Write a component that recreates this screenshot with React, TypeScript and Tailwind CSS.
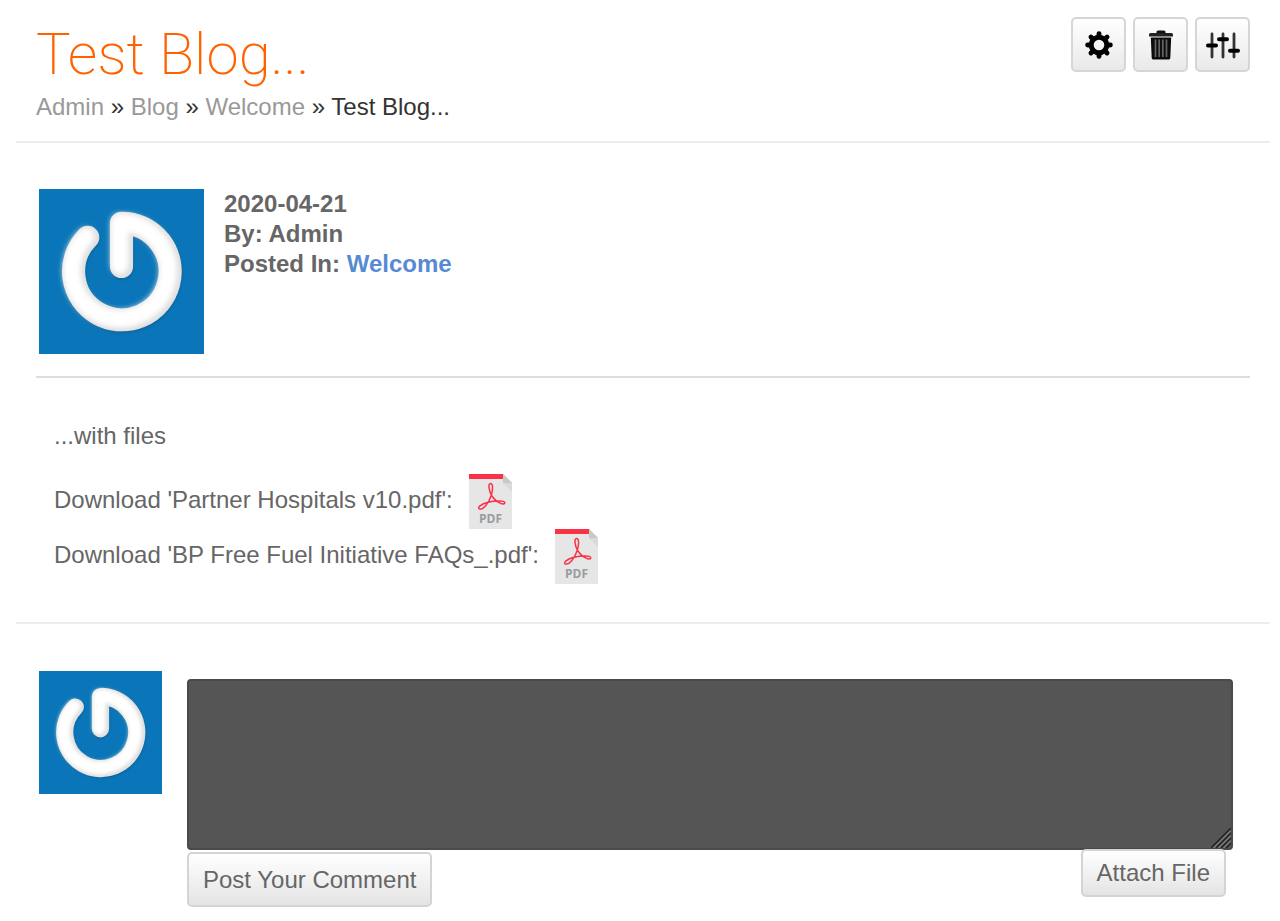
import React from 'react';

const Avatar: React.FC<{ id: string; className: string }> = ({ id, className }) => (
  <svg viewBox="0 0 164 164" className={className} role="img" aria-label="Admin">
    <defs>
      <filter id={`${id}-soft`} x="-20%" y="-20%" width="140%" height="140%">
        <feGaussianBlur stdDeviation="3" />
      </filter>
      <filter id={`${id}-shadow`} x="-20%" y="-20%" width="140%" height="140%">
        <feGaussianBlur stdDeviation="1.5" />
      </filter>
    </defs>
    <rect width="164" height="164" fill="#0a75b8" />
    <g fill="none" strokeLinecap="round" strokeLinejoin="round">
      <path d="M82 77V34A48 48 0 1 1 48.500 48" stroke="#075a92" strokeWidth="23" transform="translate(0 1)" filter={`url(#${id}-shadow)`} />
      <path d="M82 77V34A48 48 0 1 1 48.500 48" stroke="#dedede" strokeWidth="23" />
      <path d="M80 76V33A48 48 0 1 1 46.500 47" stroke="#fff" strokeWidth="15" filter={`url(#${id}-soft)`} />
      <path d="M80 76V33A48 48 0 1 1 46.500 47" stroke="#fff" strokeWidth="13" filter={`url(#${id}-soft)`} />
    </g>
  </svg>
);

const GearIcon: React.FC = () => (
  <svg width="30" height="30" viewBox="0 0 30 30" stroke="#000" fill="none" aria-hidden="true">
    <circle cx="15" cy="15" r="7.800" strokeWidth="5" />
    {[0, 45, 90, 135, 180, 225, 270, 315].map((a) => (
      <path key={a} d="M15 6.500V3.600" strokeWidth="4.800" strokeLinecap="round" transform={`rotate(${a} 15 15)`} />
    ))}
  </svg>
);

const TrashIcon: React.FC = () => (
  <svg width="30" height="30" viewBox="0 0 30 30" aria-hidden="true">
    <path d="M10.500 4V2Q10.500 .5 12 .5H18Q19.500 .5 19.500 2V4Z" fill="#111" />
    <path d="M4.500 3H25.500Q27 3 27 4.500V6.500H3V4.500Q3 3 4.500 3Z" fill="#222" />
    <path d="M4.800 7.500H25.200L24.300 28Q24.200 29.500 22.500 29.500H7.500Q5.800 29.500 5.700 28Z" fill="#0c0c0c" />
    <path d="M9.500 9.500V27M13.200 9.500V27M16.800 9.500V27M20.500 9.500V27" stroke="#666" strokeWidth="1.700" />
  </svg>
);

const SlidersIcon: React.FC = () => (
  <svg width="34" height="30" viewBox="0 0 34 30" fill="none" strokeLinecap="round" aria-hidden="true">
    <path d="M6 4V27M17 4V27M28 4V27" stroke="#333" strokeWidth="2.800" />
    <path d="M2 15.500H10M13 9.300H21M24 20.800H32" stroke="#000" strokeWidth="4" />
  </svg>
);

const PdfIcon: React.FC = () => (
  <svg width="43" height="55" viewBox="0 0 43 55" role="img" aria-label="PDF">
    <path d="M0 0H34L43 9V55H0Z" fill="#e6e6e6" />
    <path d="M34 0L43 9V18L34 9Z" fill="#dadada" />
    <path d="M34 0L43 9H34Z" fill="#c8c8c8" />
    <path d="M0 0H34V5H0Z" fill="#fa3246" />
    <path
      d="M22.600 21.500C20 17 18.800 9.600 21.500 9.600C24.500 9.600 23.700 16.500 22.300 21.300C19.500 30 14 36 10.600 35C7.500 34 12 30 19 28.300C26 26.500 36 26.200 35.800 28.800C35.500 31.500 28 29.500 22.600 21.500Z"
      fill="none"
      stroke="#fa3246"
      strokeWidth="1.500"
    />
    <text x="21.500" y="49" textAnchor="middle" fontFamily="Open Sans, sans-serif" fontWeight="700" fontSize="12" fill="#979ca1">PDF</text>
  </svg>
);

const toolButton =
  'flex size-[55px] items-center justify-center rounded-[5px] border-2 border-[#d6d6d6] bg-gradient-to-b from-white to-[#e9e9e9]';
const textButton =
  'rounded-[5px] border-2 border-[#d4d4d4] bg-gradient-to-b from-white to-[#e4e4e4] px-3.5';

const tools = [
  { label: 'Settings', icon: <GearIcon /> },
  { label: 'Delete', icon: <TrashIcon /> },
  { label: 'Options', icon: <SlidersIcon /> },
];

const files = ['Partner Hospitals v10.pdf', 'BP Free Fuel Initiative FAQs_.pdf'];

const App: React.FC = () => {
  return (
    <div className="bg-white pr-2.5 pl-4 font-['Liberation_Sans',Arial,sans-serif] text-2xl leading-[30px] text-[#666]">
      <header className="flex items-start justify-between border-b-2 border-[#ededed] px-5 pt-[17px] pb-[19px]">
        <div>
          <h1 className="font-['Roboto',sans-serif] text-[58px] leading-[75px] font-extralight text-[#ff6000]">Test Blog...</h1>
          <nav className="text-[#333]">
            <a href="#" className="text-[#999]">Admin</a> » <a href="#" className="text-[#999]">Blog</a> »{' '}
            <a href="#" className="text-[#999]">Welcome</a> » Test Blog...
          </nav>
        </div>
        <div className="flex gap-[7px]">
          {tools.map((t) => (
            <button key={t.label} type="button" aria-label={t.label} className={toolButton}>
              {t.icon}
            </button>
          ))}
        </div>
      </header>

      <main>
        <article className="border-b-2 border-[#ededed] px-5 pt-[46px] pb-[38px]">
          <div className="flex gap-5 border-b-2 border-[#ddd] pb-[22px] pl-[3px] font-bold">
            <Avatar id="author" className="size-[165px] shrink-0" />
            <div>
              <p>2020-04-21</p>
              <p>By: Admin</p>
              <p>
                Posted In: <a href="#" className="text-[#568ad2]">Welcome</a>
              </p>
            </div>
          </div>
          <div className="px-[18px] pt-[43px]">
            <p className="mb-[23px]">...with files</p>
            {files.map((name) => (
              <div key={name} className="flex h-[55px] items-center gap-4">
                <span className="pb-1">Download '{name}':</span>
                <a href="#">
                  <PdfIcon />
                </a>
              </div>
            ))}
          </div>
        </article>

        <form className="flex items-start gap-[25px] pt-[47px] pr-[37px] pl-[23px]">
          <Avatar id="commenter" className="size-[123px] shrink-0" />
          <div className="grow pt-2">
            <div className="relative">
              <textarea
                aria-label="Comment"
                className="block h-[171px] w-full resize-none rounded border-2 border-[#4a4a4a] bg-[#555] p-3 text-white"
              />
              <svg width="20" height="20" viewBox="0 0 20 20" className="absolute right-0.5 bottom-0.5" aria-hidden="true">
                <path d="M0 20L20 0M5 20L20 5M10 20L20 10M15 20L20 15" stroke="#222" strokeWidth="1.500" />
                <path d="M2.500 20L20 2.500M7.500 20L20 7.500M12.500 20L20 12.500" stroke="#999" strokeWidth="1" />
              </svg>
            </div>
            <div className="flex items-start justify-between pr-[7px]">
              <button type="submit" className={`${textButton} mt-0.5 h-[55px]`}>Post Your Comment</button>
              <button type="button" className={`${textButton} relative -mt-px h-12`}>Attach File</button>
            </div>
          </div>
        </form>
      </main>
    </div>
  );
};

export default App;
